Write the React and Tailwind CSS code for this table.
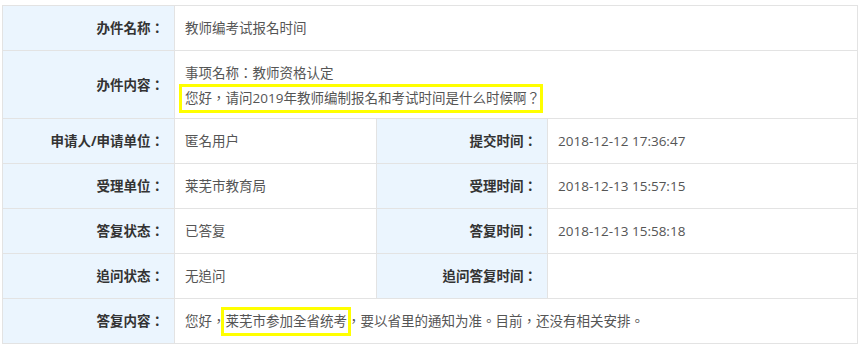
import React from 'react';

const rows = [
    { label: '申请人/申请单位：', value: '匿名用户', label2: '提交时间：', value2: '2018-12-12 17:36:47' },
    { label: '受理单位：', value: '莱芜市教育局', label2: '受理时间：', value2: '2018-12-13 15:57:15' },
    { label: '答复状态：', value: '已答复', label2: '答复时间：', value2: '2018-12-13 15:58:18' },
    { label: '追问状态：', value: '无追问', label2: '追问答复时间：', value2: '' },
];

const labelCls = 'border border-[#e3e3e3] bg-[#ebf5fe] text-right pr-[10px] font-bold text-[#333] align-middle';
const valueCls = 'border border-[#e3e3e3] bg-white text-left pl-[10px] text-[#555] align-middle';

const App = () => {
    return (
        <div
            className="w-[862px] h-[348px] bg-white pl-[2px] pt-[5px] text-[13.5px] leading-[22px]"
            style={{ fontFamily: '"Open Sans", "Noto Sans CJK TC", sans-serif' }}
        >
            <table className="w-[855px] border-collapse table-fixed">
                <colgroup>
                    <col className="w-[172px]" />
                    <col className="w-[202px]" />
                    <col className="w-[171px]" />
                    <col className="w-[310px]" />
                </colgroup>
                <tbody>
                    <tr className="h-[45px]">
                        <td className={labelCls}>办件名称：</td>
                        <td className={valueCls} colSpan={3}>教师编考试报名时间</td>
                    </tr>
                    <tr className="h-[68px]">
                        <td className={labelCls}>办件内容：</td>
                        <td className={`${valueCls} pt-[6px]`} colSpan={3}>
                            <div className="leading-[21px]">事项名称：教师资格认定</div>
                            <div className="inline-block -ml-[6px] border-[3px] border-[#ffff00] pl-[3px] pr-0 leading-[23px]">
                                您好，请问2019年教师编制报名和考试时间是什么时候啊？
                            </div>
                        </td>
                    </tr>
                    {rows.map((r) => (
                        <tr key={r.label} className="h-[45px]">
                            <td className={labelCls}>{r.label}</td>
                            <td className={valueCls}>{r.value}</td>
                            <td className={labelCls}>{r.label2}</td>
                            <td className={valueCls}>{r.value2}</td>
                        </tr>
                    ))}
                    <tr className="h-[45px]">
                        <td className={labelCls}>答复内容：</td>
                        <td className={valueCls} colSpan={3}>
                            您好，<span className="inline-block -ml-[5px] -mr-[4px] border-[3px] border-[#ffff00] pl-[2px] pr-[1px] leading-[23px]">莱芜市参加全省统考</span>，要以省里的通知为准。目前，还没有相关安排。
                        </td>
                    </tr>
                </tbody>
            </table>
        </div>
    );
};

export default App;
